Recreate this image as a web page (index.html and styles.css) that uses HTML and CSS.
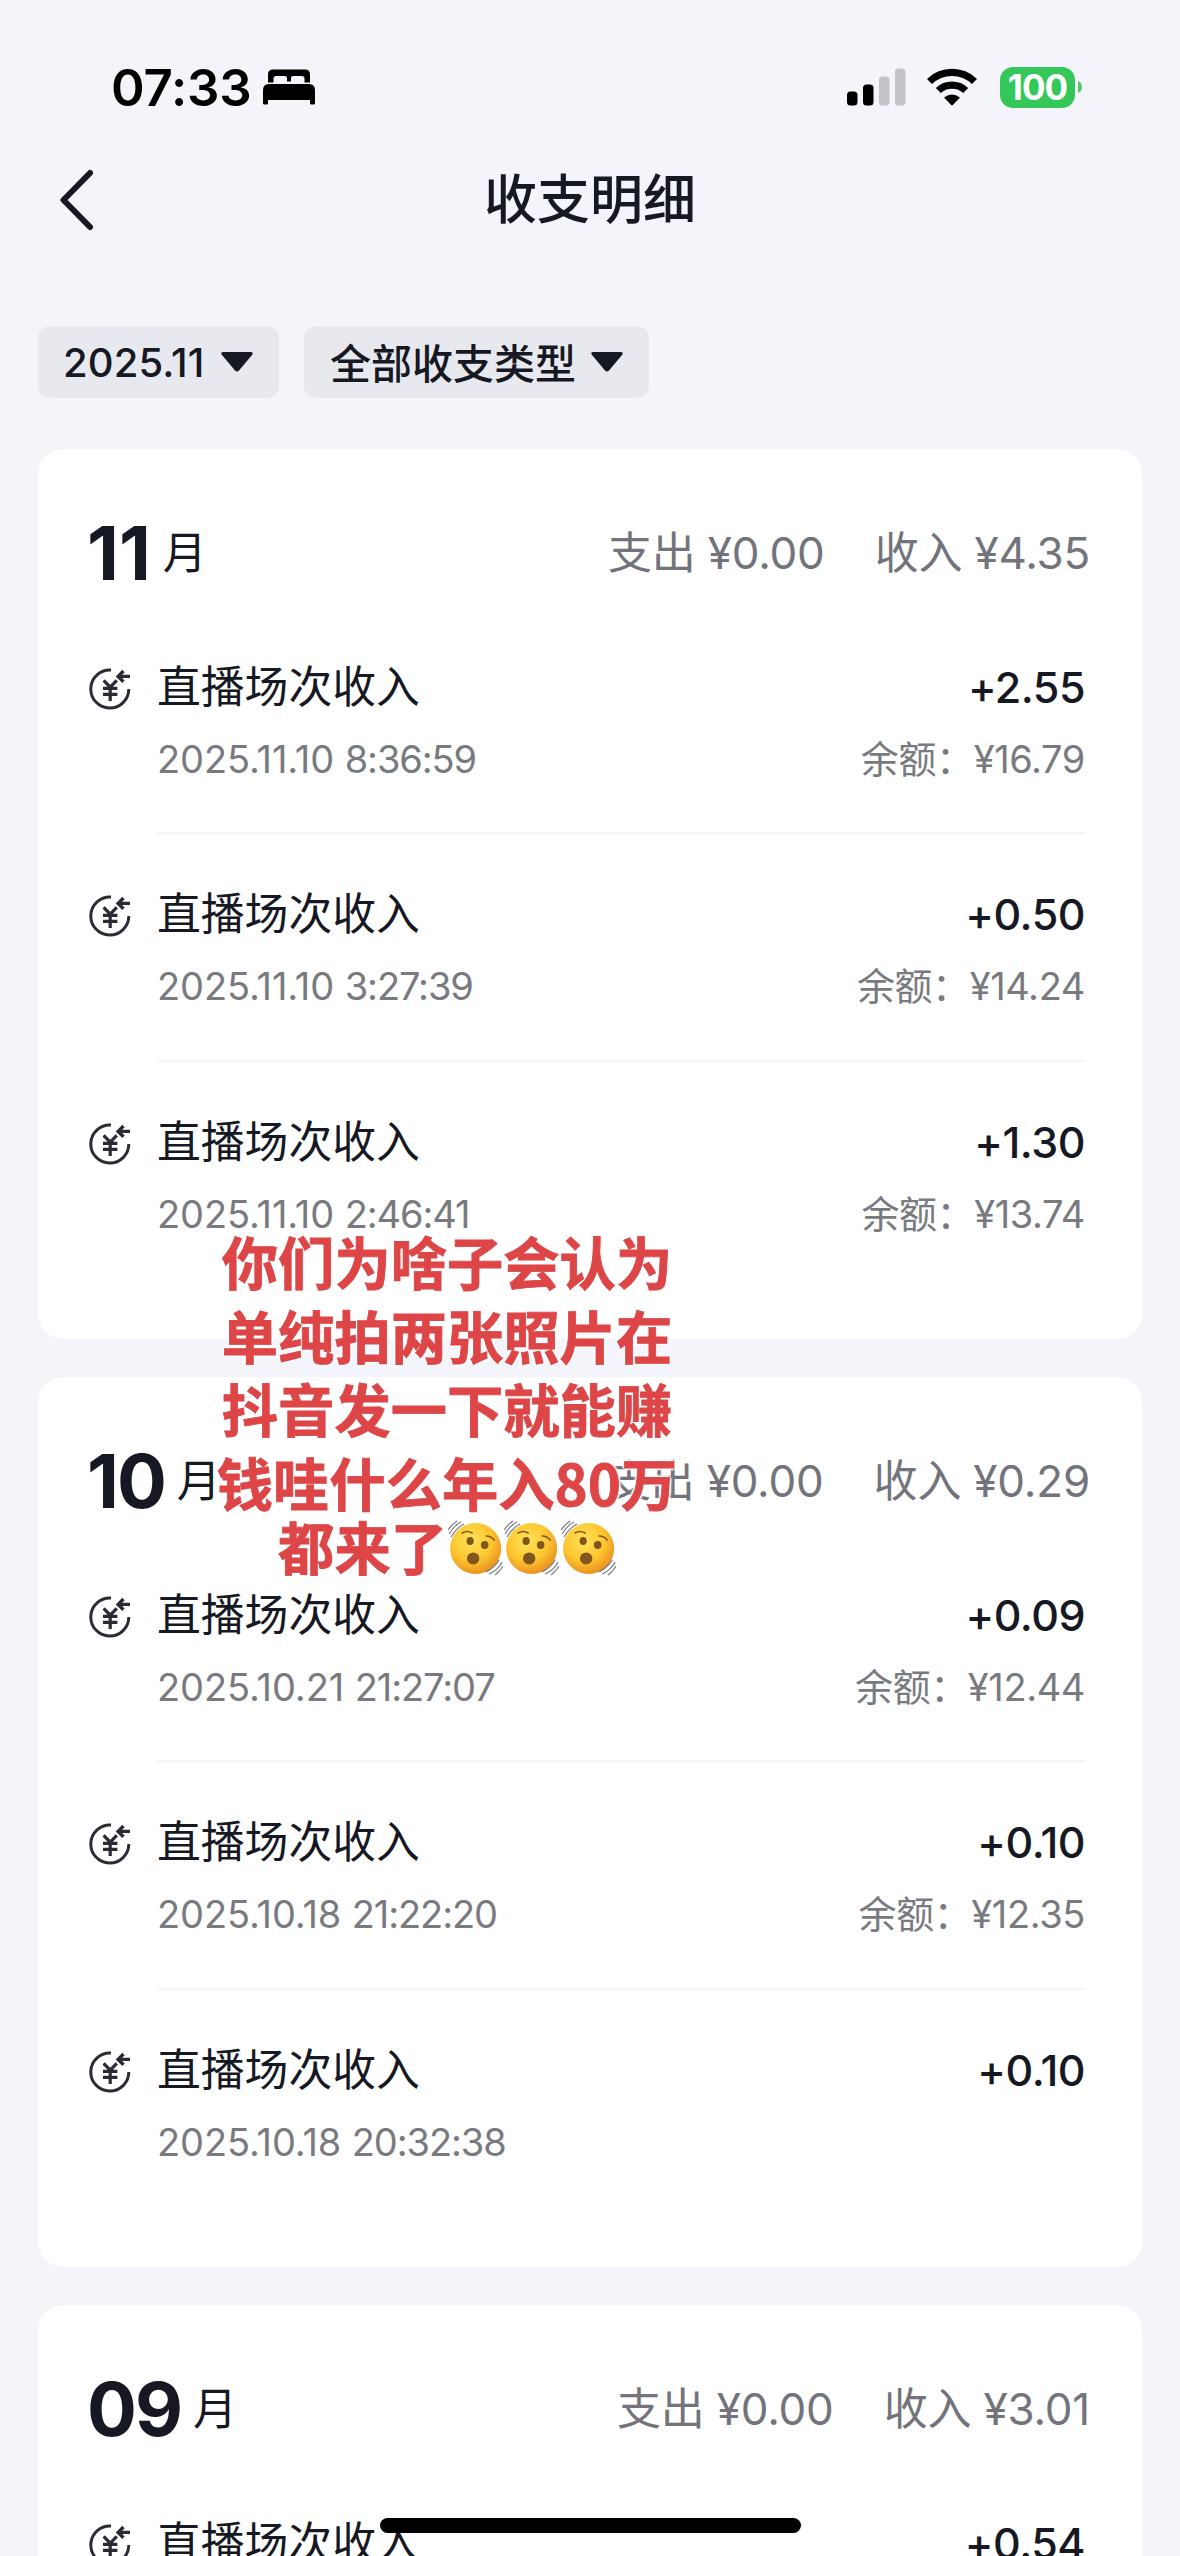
FILE: index.html
```html
<!DOCTYPE html>
<html lang="zh-CN">
<head>
<meta charset="utf-8">
<title>收支明细</title>
<link rel="stylesheet" href="styles.css">
</head>
<body>
<svg class="defs" aria-hidden="true">
  <symbol id="income" viewBox="0 0 42 42">
    <g fill="none" stroke="#2b2b35" stroke-width="3">
      <path d="M22 2.1A19 19 0 1 0 39.8 21"/>
      <path d="M41 8.4H30M34.5 3l-5.4 5.4 5.400 5.400" stroke-width="3.400"/>
      <path d="M14.6 12.4l6.6 6.8 6.6-6.8M14 20.4h14.4M14 26.4h14.4M21.2 19v14" stroke-width="3.200"/>
    </g>
  </symbol>
  <radialGradient id="face" cx="42%" cy="35%" r="65%">
    <stop offset="0" stop-color="#ffe45c"/><stop offset=".6" stop-color="#fdc62f"/><stop offset="1" stop-color="#ea9220"/>
  </radialGradient>
  <symbol id="shaking" viewBox="0 0 56 56">
    <circle cx="28.5" cy="28.5" r="25.5" fill="url(#face)"/>
    <g fill="none" stroke="#777b85" stroke-width="1.2">
      <path d="M2 14Q6 6 14 2M1 10Q4 5 10 1M4 17Q9 8 17 4"/>
      <path d="M55 42Q51 50 42 54M56 46Q53 51 48 55M52 40Q48 47 39 52"/>
    </g>
    <g fill="#80561c"><ellipse cx="23" cy="21" rx="3.6" ry="4"/><ellipse cx="37.5" cy="25" rx="3.8" ry="4"/><ellipse cx="26" cy="38.5" rx="6.2" ry="6"/></g>
    <path d="M15 13q5-3 10 0M39 16q5 0 8 4" fill="none" stroke="#80561c" stroke-width="1.6" stroke-linecap="round"/>
  </symbol>
</svg>

<div class="screen">
  <header class="status">
    <div class="status-left">
      <span class="time">07:33</span>
      <svg class="bed" viewBox="0 0 52 36"><path d="M5 13.5V5.5Q5 .5 10 .5H42Q47 .5 47 5.5V13.5H41.5V9.5Q41.5 7 39 7H30Q28 7 28 9V12.5H24V9Q24 7 22 7H13Q10.5 7 10.5 9.5V13.5ZM0 21Q0 15 6 15H46Q52 15 52 21V34Q52 35.5 50.5 35.5H48.5Q47 35.5 47 34V31H5V34Q5 35.5 3.5 35.5H1.5Q0 35.5 0 34Z"/></svg>
    </div>
    <div class="status-right">
      <svg class="signal" viewBox="0 0 59 38"><rect y="23.5" width="10.5" height="14" rx="3.5"/><rect x="16" y="16.5" width="10.5" height="21" rx="3.5"/><g fill="#c3c3c8"><rect x="32" y="8.5" width="10.5" height="29" rx="3.5"/><rect x="48" y=".5" width="10.5" height="37" rx="3.5"/></g></svg>
      <svg class="wifi" viewBox="0 0 50 38"><g fill="none" stroke="#000" stroke-width="7.2"><path d="M2.5 13.5A32.5 32.5 0 0 1 47.5 13.5"/><path d="M11.3 22.5A20 20 0 0 1 38.7 22.5"/></g><path d="M17 29.5Q25 23.5 33 29.5L26 36.7Q25 37.7 24 36.7Z"/></svg>
      <div class="battery"><span class="level">100</span><svg class="nub" viewBox="0 0 4 12"><path d="M0 0Q4 1.5 4 6T0 12Z" fill="#5cc46d"/></svg></div>
    </div>
  </header>

  <nav class="nav">
    <svg class="back" viewBox="0 0 34 62"><path d="M30 4L3.5 31l26.500 27" fill="none" stroke="#161823" stroke-width="6" stroke-linecap="round" stroke-linejoin="round"/></svg>
    <h1 class="title">收支明细</h1>
  </nav>

  <div class="filters">
    <div class="chip"><span class="chip-date">2025.11</span><svg class="caret" viewBox="0 0 32 20"><path d="M2 0H30Q33 .5 31 3L18 18.5Q16 20.5 14 18.5L1 3Q-1 .5 2 0Z"/></svg></div>
    <div class="chip"><span class="chip-type">全部收支类型</span><svg class="caret" viewBox="0 0 32 20"><path d="M2 0H30Q33 .5 31 3L18 18.5Q16 20.5 14 18.5L1 3Q-1 .5 2 0Z"/></svg></div>
  </div>

  <main class="months">
    <section class="card">
      <div class="head"><b class="num narrow">11</b><span class="unit">月</span><span class="sum">支出 ¥0.00</span><span class="sum">收入 ¥4.35</span></div>
      <div class="item"><svg class="icon"><use href="#income"/></svg><div class="detail"><span class="name">直播场次收入</span><span class="amount">+2.55</span><span class="date">2025.11.10 <span class="clock">8:36:59</span></span><span class="balance">余额：¥16.79</span></div></div>
      <div class="item"><svg class="icon"><use href="#income"/></svg><div class="detail"><span class="name">直播场次收入</span><span class="amount">+0.50</span><span class="date">2025.11.10 <span class="clock">3:27:39</span></span><span class="balance">余额：¥14.24</span></div></div>
      <div class="item"><svg class="icon"><use href="#income"/></svg><div class="detail"><span class="name">直播场次收入</span><span class="amount">+1.30</span><span class="date">2025.11.10 <span class="clock">2:46:41</span></span><span class="balance">余额：¥13.74</span></div></div>
    </section>
    <section class="card">
      <div class="head"><b class="num">10</b><span class="unit">月</span><span class="sum">支出 ¥0.00</span><span class="sum">收入 ¥0.29</span></div>
      <div class="item"><svg class="icon"><use href="#income"/></svg><div class="detail"><span class="name">直播场次收入</span><span class="amount">+0.09</span><span class="date">2025.10.21 <span class="clock">21:27:07</span></span><span class="balance">余额：¥12.44</span></div></div>
      <div class="item"><svg class="icon"><use href="#income"/></svg><div class="detail"><span class="name">直播场次收入</span><span class="amount">+0.10</span><span class="date">2025.10.18 <span class="clock">21:22:20</span></span><span class="balance">余额：¥12.35</span></div></div>
      <div class="item"><svg class="icon"><use href="#income"/></svg><div class="detail"><span class="name">直播场次收入</span><span class="amount">+0.10</span><span class="date">2025.10.18 <span class="clock">20:32:38</span></span></div></div>
    </section>
    <section class="card">
      <div class="head"><b class="num">09</b><span class="unit">月</span><span class="sum">支出 ¥0.00</span><span class="sum">收入 ¥3.01</span></div>
      <div class="item"><svg class="icon"><use href="#income"/></svg><div class="detail"><span class="name">直播场次收入</span><span class="amount">+0.54</span></div></div>
    </section>
  </main>

  <div class="caption">
    <p>你们为啥子会认为</p>
    <p>单纯拍两张照片在</p>
    <p>抖音发一下就能赚</p>
    <p>钱哇什么年入<span class="digits">80</span>万</p>
    <p class="last">都来了<svg><use href="#shaking"/></svg><svg><use href="#shaking"/></svg><svg><use href="#shaking"/></svg></p>
  </div>
  <div class="home-bar"></div>
</div>
</body>
</html>
```
FILE: styles.css
```css
* { box-sizing: border-box; margin: 0; padding: 0; }
body { background: #f4f5fb; color: #161823; font-family: "Inter", "Noto Sans CJK SC", sans-serif; }
.defs { position: absolute; width: 0; height: 0; }
.screen { position: relative; width: 1180px; height: 2556px; overflow: hidden; }
svg { display: block; flex: none; }
span, b, h1 { white-space: nowrap; }

.status { display: flex; justify-content: space-between; height: 142px; padding: 50px 98px 0 111px; color: #000; }
.status-left, .status-right { display: flex; align-items: center; height: 74px; }
.time { width: 152px; font-size: 51px; font-weight: 600; letter-spacing: -0.2px; }
.bed { width: 52px; height: 36px; }
.signal { width: 59px; height: 38px; margin-right: 21px; }
.wifi { width: 50px; height: 38px; margin-right: 23px; }
.battery { display: flex; align-items: center; gap: 3px; }
.level { width: 75px; height: 41px; border-radius: 13px; background: #34c759; color: #fff; font-size: 35px; font-weight: 700; line-height: 41px; text-align: center; letter-spacing: -1px; }
.nub { width: 4px; height: 12px; }

.nav { display: flex; align-items: center; height: 116px; padding: 0 60px; }
.back { width: 34px; height: 62px; }
.title { flex: 1; margin-right: 34px; font-size: 53px; font-weight: 500; line-height: 72px; text-align: center; }

.filters { display: flex; gap: 25px; padding: 68px 38px 51px; }
.chip { display: flex; align-items: center; height: 72px; padding: 0 26px 0 25px; border-radius: 12px; background: #e8e9ee; font-size: 41px; font-weight: 500; }
.chip-date { width: 142px; font-size: 40px; letter-spacing: 0.1px; }
.chip-type { padding: 0 0 3px 1px; margin-right: -1px; }
.caret { width: 32px; height: 20px; margin-left: 16px; fill: #161823; }

.months { display: flex; flex-direction: column; gap: 38px; padding: 0 38px; }
.card { height: 890px; flex: none; padding: 0 52px; border-radius: 25px; background: #fff; }
.head { display: flex; align-items: center; height: 158px; padding-top: 50px; }
.num { margin-left: -3px; font-size: 74px; font-weight: 700; line-height: 80px; letter-spacing: -2px; }
.narrow { letter-spacing: 0; }
.unit { margin-right: auto; padding-left: 12px; font-size: 44px; line-height: 80px; }
.sum { margin-left: 50px; color: #73747b; font-size: 44px; line-height: 80px; letter-spacing: -0.2px; }

.item { display: flex; gap: 26px; height: 227.4px; }
.icon { width: 42px; height: 42px; margin: 61px 0 0 -1px; }
.detail { flex: 1; display: grid; grid-template-columns: 1fr auto; grid-template-rows: 62px 54px; row-gap: 14px; margin-right: 5px; padding-top: 49px; border-bottom: 2px solid #f5f5f7; }
.item:last-child .detail { border-bottom: 0; }
.name { font-size: 43.8px; line-height: 64px; }
.amount { font-size: 43px; font-weight: 500; line-height: 62px; text-align: right; letter-spacing: -0.5px; }
.date { color: #797a80; font-size: 38px; line-height: 54px; letter-spacing: -0.1px; }
.clock { letter-spacing: -1.1px; }
.balance { color: #797a80; font-size: 38px; line-height: 54px; text-align: right; letter-spacing: -0.4px; }

.caption { position: absolute; left: 197px; top: 1224px; width: 500px; color: #dd4547; font-family: "Noto Sans CJK SC", sans-serif; font-size: 56.3px; font-weight: 700; -webkit-text-stroke: 0.8px #dd4547; text-shadow: 0 0 2px #fff, 0 0 3px #fff, 2px 0 2px #fff, -2px 0 2px #fff, 0 2px 2px #fff, 0 -2px 2px #fff; }
.caption p { display: flex; justify-content: center; height: 73.5px; line-height: 73.5px; white-space: nowrap; }
.caption .last { height: 64px; line-height: 56px; }
.caption svg { width: 56.3px; height: 56px; margin-top: 2px; }
.home-bar { position: absolute; left: 380px; top: 2518px; width: 421px; height: 15px; border-radius: 8px; background: #000; }
```
